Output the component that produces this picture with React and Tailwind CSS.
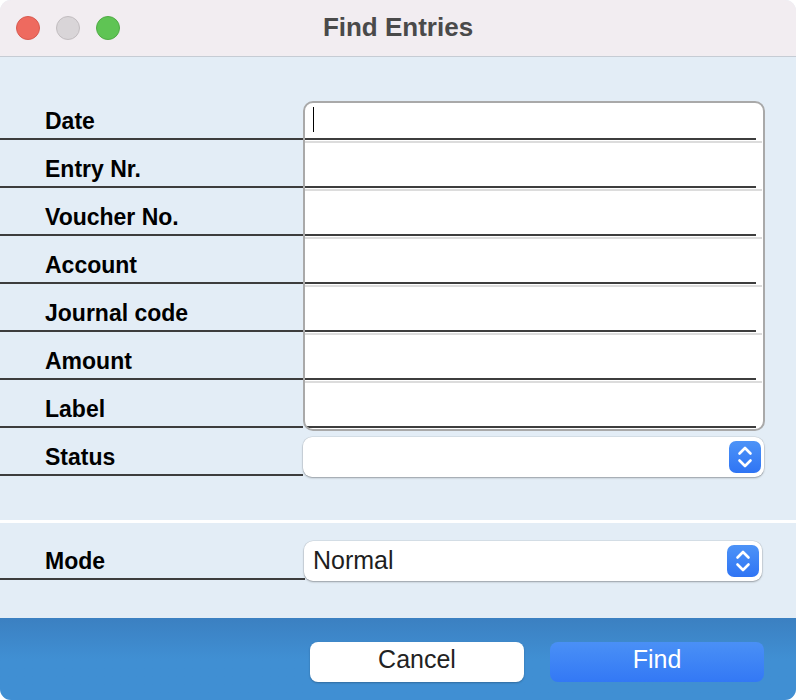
import React from 'react';

const fieldLabels = ['Date', 'Entry Nr.', 'Voucher No.', 'Account', 'Journal code', 'Amount', 'Label'];

function Stepper() {
  return (
    <div className="w-[32px] h-[32px] rounded-[7px] bg-gradient-to-b from-[#4d93f7] to-[#2f74f4] flex items-center justify-center">
      <svg width="32" height="32" viewBox="0 0 32 32" fill="none" stroke="white" strokeWidth="2.6" strokeLinecap="round" strokeLinejoin="round">
        <polyline points="10.5,12.5 16,7 21.5,12.5" />
        <polyline points="10.5,19.5 16,25 21.5,19.5" />
      </svg>
    </div>
  );
}

function Select({ value, width }) {
  return (
    <div className={`h-[40px] ${width} bg-white rounded-[9px] shadow-[0_0_0_0.5px_rgba(0,0,0,0.1),0_1px_2px_rgba(0,0,0,0.3)] flex items-center justify-between pl-[9px] pr-[3px]`}>
      <span className="text-[25px] text-[#1e1e1e] leading-none pb-[1px]">{value}</span>
      <Stepper />
    </div>
  );
}

function LabelRow({ text, width = 'w-[303px]' }) {
  return (
    <div className={`${width} h-[48px] border-b-2 border-[#3d3d3d] flex items-end pl-[45px] pb-[5px]`}>
      <span className="text-[23px] font-bold text-black leading-[24px]">{text}</span>
    </div>
  );
}

export default function App() {
  return (
    <div className="w-[796px] h-[700px] bg-white" style={{ fontFamily: '"Liberation Sans", Arial, sans-serif' }}>
      <div className="w-full h-full rounded-[11px] overflow-hidden flex flex-col bg-[#e3edf6]">
        {/* Title bar */}
        <div className="h-[57px] shrink-0 bg-[#f2edf1] border-b border-[#c6ccd4] flex items-center relative">
          <div className="flex gap-[16px] pl-[16px]">
            <div className="w-[24px] h-[24px] rounded-full bg-[#ee6a5f] border border-[#d85a50]" />
            <div className="w-[24px] h-[24px] rounded-full bg-[#d9d5d8] border border-[#c2bdc0]" />
            <div className="w-[24px] h-[24px] rounded-full bg-[#5fc454] border border-[#50ab45]" />
          </div>
          <div className="absolute inset-0 flex items-center justify-center pb-[1px]">
            <span className="text-[26px] font-bold text-[#4a4a4a]">Find Entries</span>
          </div>
        </div>

        {/* Fields */}
        <div className="h-[463px] shrink-0 flex items-start">
          <div className="pt-[35px] flex flex-col">
            {fieldLabels.map(l => <LabelRow key={l} text={l} />)}
            <LabelRow text="Status" />
          </div>
          <div className="mt-[44px] flex flex-col">
            <div className="w-[462px] h-[330px] border-2 border-[#a9a9a9] rounded-[10px] bg-white overflow-hidden flex flex-col">
              <div className="h-[37px] shrink-0 mr-[7px] border-b-2 border-[#3d3d3d] relative">
                <div className="absolute left-[8px] top-[4px] w-[1px] h-[25px] bg-black" />
              </div>
              {fieldLabels.slice(1).map(l => (
                <div key={l} className="h-[48px] shrink-0 flex flex-col pt-[1px]">
                  <div className="h-[2px] mr-[1px] bg-[#dcdcdc]" />
                  <div className="flex-1 mr-[7px] border-b-2 border-[#3d3d3d]" />
                </div>
              ))}
            </div>
            <div className="mt-[6px]">
              <Select value="" width="w-[461px]" />
            </div>
          </div>
        </div>

        <div className="h-[3px] shrink-0 bg-white" />

        {/* Mode */}
        <div className="h-[95px] shrink-0 flex items-start pt-[9px]">
          <LabelRow text="Mode" width="w-[305px]" />
          <div className="mt-[9px] -ml-[1px]">
            <Select value="Normal" width="w-[458px]" />
          </div>
        </div>

        {/* Bottom bar */}
        <div className="flex-1 bg-gradient-to-b from-[#3b80c1] via-[#408fd3] to-[#408fd3] flex items-start pt-[24px] pl-[310px] gap-[26px]">
          <button className="w-[214px] h-[40px] bg-white rounded-[8px] shadow-[0_1px_2px_rgba(0,0,0,0.25)] text-[25px] leading-none pb-[6px] text-[#222]">Cancel</button>
          <button className="w-[214px] h-[40px] rounded-[8px] bg-gradient-to-b from-[#4a90f6] to-[#3378f5] text-[25px] leading-none pb-[6px] text-white">Find</button>
        </div>
      </div>
    </div>
  );
}
